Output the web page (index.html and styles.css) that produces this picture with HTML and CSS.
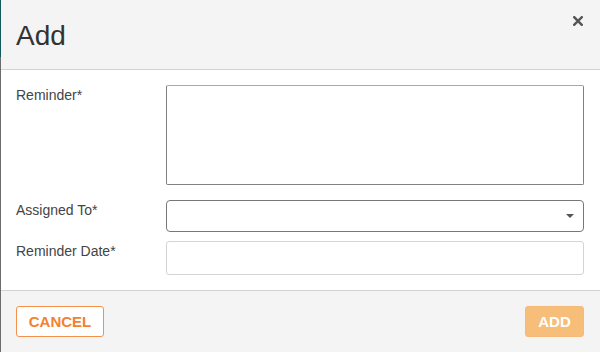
FILE: index.html
```html
<!DOCTYPE html>
<html lang="en">
<head>
<meta charset="utf-8">
<title>Add</title>
<link rel="stylesheet" href="styles.css">
</head>
<body>
<div class="page">
  <div class="edge"><div class="edge-top"></div><div class="edge-bottom"></div></div>
  <div class="modal">
    <header class="modal-header">
      <h1 class="modal-title">Add</h1>
      <button class="close" type="button" aria-label="Close">
        <svg width="10" height="10" viewBox="0 0 10 10"><path d="M1.2 1.2 L8.8 8.8 M8.8 1.2 L1.2 8.8" stroke="#555" stroke-width="2.4" stroke-linecap="square" fill="none"/></svg>
      </button>
    </header>
    <main class="modal-body">
      <div class="row row-reminder">
        <label class="label">Reminder*</label>
        <textarea class="field textarea"></textarea>
      </div>
      <div class="row row-assigned">
        <label class="label">Assigned To*</label>
        <div class="field select"><span class="caret"></span></div>
      </div>
      <div class="row row-date">
        <label class="label">Reminder Date*</label>
        <input class="field date" type="text">
      </div>
    </main>
    <footer class="modal-footer">
      <button class="btn btn-cancel" type="button">CANCEL</button>
      <button class="btn btn-add" type="button">ADD</button>
    </footer>
  </div>
</div>
</body>
</html>
```

FILE: styles.css
```css
* { box-sizing: border-box; }
html, body { margin: 0; padding: 0; }
body {
  width: 600px;
  height: 352px;
  overflow: hidden;
  font-family: "Liberation Sans", Arial, sans-serif;
  background: #fff;
}
.page {
  display: flex;
  height: 352px;
}
.edge {
  width: 1px;
  display: flex;
  flex-direction: column;
}
.edge-top { height: 57px; background: #12595f; }
.edge-bottom { flex: 1; background: #6c6c6c; }
.modal {
  flex: 1;
  display: flex;
  flex-direction: column;
}
.modal-header {
  height: 70px;
  background: #f4f4f4;
  border-bottom: 1px solid #d2d2d2;
  display: flex;
  justify-content: space-between;
  align-items: flex-start;
  padding: 16px 17px 0 15px;
}
.modal-title {
  margin: 4px 0 0;
  font-size: 28px;
  line-height: 32px;
  font-weight: normal;
  color: #333;
}
.close {
  border: 0;
  background: none;
  padding: 0;
  width: 10px;
  height: 10px;
  display: block;
}
.close svg { display: block; }
.modal-body {
  height: 220px;
  background: #fff;
  padding: 15px 16px 15px 15px;
  display: flex;
  flex-direction: column;
}
.row {
  display: grid;
  grid-template-columns: 150px 1fr;
}
.row-assigned { margin-top: 15px; }
.row-date { margin-top: 9px; }
.label {
  font-size: 14px;
  line-height: 16px;
  padding-top: 2px;
  color: #444;
}
.field {
  display: block;
  width: 100%;
  margin: 0;
  background: #fff;
  font: inherit;
  outline: none;
}
.textarea {
  height: 100px;
  resize: none;
  border: 1px solid #808080;
  border-top-color: #a8a8a8;
  border-radius: 2px;
}
.select {
  height: 32px;
  border: 1px solid #777;
  border-radius: 4px;
  display: flex;
  align-items: center;
  justify-content: flex-end;
  padding-right: 9px;
}
.caret {
  width: 0;
  height: 0;
  border-left: 4px solid transparent;
  border-right: 4px solid transparent;
  border-top: 4px solid #555;
  margin-top: -1px;
}
.date {
  height: 34px;
  border: 1px solid #d4d4d4;
  border-radius: 3px;
}
.modal-footer {
  flex: 1;
  background: #f4f4f4;
  border-top: 1px solid #d2d2d2;
  display: flex;
  justify-content: space-between;
  align-items: flex-start;
  padding: 15px 16px 0 15px;
}
.btn {
  height: 31px;
  font-family: inherit;
  font-size: 15px;
  font-weight: bold;
  border-radius: 3px;
  margin: 0;
  line-height: 1;
}
.btn-cancel {
  width: 88px;
  background: #fff;
  color: #f4812f;
  border: 1px solid #f5914a;
  padding: 0;
}
.btn-add {
  width: 59px;
  background: #f7be79;
  color: #fff;
  border: 1px solid #f5b978;
  padding: 0;
}
```
